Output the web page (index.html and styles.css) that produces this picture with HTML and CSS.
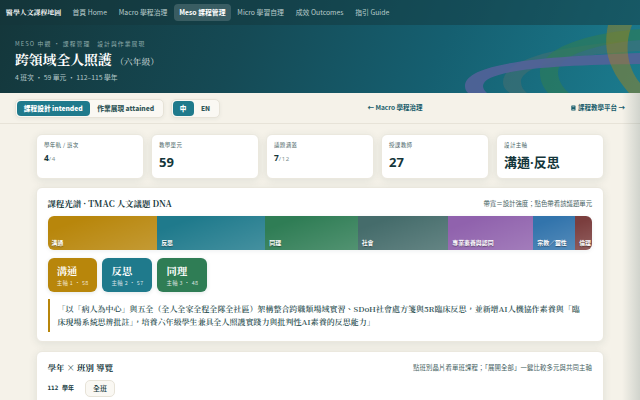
FILE: index.html
```html
<!DOCTYPE html>
<html lang="zh-Hant">
<head>
  <meta charset="UTF-8">
  <meta name="viewport" content="width=device-width, initial-scale=1.0">
  <title>醫學人文課程地圖</title>
  <link rel="stylesheet" href="styles.css">
</head>
<body>
  <header class="top">
    <nav class="nav">
      <span class="brand">醫學人文課程地圖</span>
      <a>首頁 Home</a>
      <a>Macro 學程治理</a>
      <a class="active">Meso 課程管理</a>
      <a>Micro 學習自理</a>
      <a>成效 Outcomes</a>
      <a>指引 Guide</a>
    </nav>
    <div class="hero">
      <svg class="arcs" viewBox="460 25 180 68" width="180" height="68">
        <path class="arc-gray" d="M640 40 C575 44 503 56 503 82 C503 86 505 90 510 93 H527 C523 90 521 86 521 82 C521 64 580 54 640 51 Z"/>
        <path class="arc-green" d="M640 29 C590 33 540 47 540 73 C540 81 543 87 548 93 H569 C562 87 558 80 558 72 C558 55 597 44 640 40 Z"/>
        <path class="arc-purple" d="M640 53 C560 56 465 61 465 86 C465 89 466 91 468 93 H487 C485 91 483 89 483 86 C483 69 560 65 640 64 Z"/>
        <path class="arc-olive" d="M608 25 C604 45 605 65 629 93 H640 V83 C627 67 624 45 632 25 Z"/>
      </svg>
      <div class="eyebrow">MESO 中觀 · 課程管理　設計與作業展現</div>
      <h1>跨領域全人照護 <small>（六年級）</small></h1>
      <div class="meta">4 班次 · 59 單元 · 112–115 學年</div>
    </div>
  </header>

  <div class="toolbar">
    <div class="toggle mode"><b class="on">課程設計 intended</b><b>作業展現 attained</b></div>
    <div class="toggle lang"><b class="on">中</b><b>EN</b></div>
    <a class="macro-link">← Macro 學程治理</a>
    <a class="platform-link">
      <svg width="5" height="6" viewBox="0 0 5 6"><rect x="0.3" y="0.5" width="4.2" height="5" rx="0.5"/><path d="M1.3 1.7h2.2M1.3 4.5h2.2"/></svg>
      課程教學平台 →
    </a>
  </div>

  <main class="page">
    <section class="stats">
      <div class="stat"><label>學年軌 / 班次</label><div class="num small">4<i>/4</i></div></div>
      <div class="stat"><label>教學單元</label><div class="num">59</div></div>
      <div class="stat"><label>議題涵蓋</label><div class="num small">7<i>/12</i></div></div>
      <div class="stat"><label>授課教師</label><div class="num">27</div></div>
      <div class="stat"><label>設計主軸</label><div class="num">溝通·反思</div></div>
    </section>

    <section class="panel spectrum">
      <div class="panel-head">
        <h2>課程光譜 · TMAC 人文議題 DNA</h2>
        <span>帶寬＝設計強度；點色帶看該議題單元</span>
      </div>
      <div class="dna">
        <div class="band gold" style="width:20.15%">溝通</div>
        <div class="band teal" style="width:19.85%">反思</div>
        <div class="band green" style="width:16.95%">同理</div>
        <div class="band slate" style="width:16.65%">社會</div>
        <div class="band purple" style="width:15.6%">專業素養與認同</div>
        <div class="band blue" style="width:7.7%">宗教／靈性</div>
        <div class="band red" style="width:3.1%">倫理</div>
      </div>
      <div class="axes">
        <div class="axis gold"><strong>溝通</strong><span>主軸 1 · 58</span></div>
        <div class="axis teal"><strong>反思</strong><span>主軸 2 · 57</span></div>
        <div class="axis green"><strong>同理</strong><span>主軸 3 · 48</span></div>
      </div>
      <blockquote>「以「病人為中心」與五全（全人全家全程全隊全社區）架構整合跨職類場域實習、SDoH社會處方箋與5R臨床反思，並新增AI人機協作素養與「臨<br>床現場系統思辨批註」，培養六年級學生兼具全人照護實踐力與批判性AI素養的反思能力」</blockquote>
    </section>

    <section class="panel classes">
      <div class="panel-head">
        <h2>學年 × 班別 導覽</h2>
        <span>點班別晶片看單班課程；「展開全部」一鍵比較多元與共同主軸</span>
      </div>
      <div class="year"><b>112 學年</b><button>全班</button></div>
    </section>
  </main>
  <div class="edge-shade"></div>
</body>
</html>
```

FILE: styles.css
```css
* { box-sizing: border-box; }
body {
  margin: 0;
  height: 400px;
  overflow: hidden;
  position: relative;
  background: #f5f2e9;
  color: #173b3f;
  font-family: "Noto Sans", "Noto Sans CJK TC", sans-serif;
  font-size: 6px;
  line-height: 1.4;
}
.brand, h1, h2, .axis strong, blockquote {
  font-family: "Noto Serif TC", "Noto Serif CJK TC", "Noto Sans CJK TC", serif;
}
.top {
  height: 93px;
  background: linear-gradient(112deg, #14363a 0%, #154a55 38%, #155f70 68%, #1b7b8e 100%);
  color: #fff;
}
.nav {
  height: 25px;
  display: flex;
  align-items: center;
  padding-left: 6px;
  background: rgba(20, 54, 58, 0.45);
  font-family: "Noto Sans CJK TC", sans-serif;
  font-size: 6.85px;
  white-space: nowrap;
}
.brand {
  width: 61px;
  font-size: 6.9px;
  font-weight: 700;
}
.nav a {
  height: 17px;
  line-height: 17px;
  padding: 0 5.5px;
  margin-right: 0.8px;
  border-radius: 4px;
  color: #b9cccb;
}
.nav .active {
  background: rgba(255, 255, 255, 0.16);
  color: #fff;
  font-weight: 700;
}
.hero {
  position: relative;
  height: 68px;
  padding: 14px 15px 0;
  font-family: "Noto Sans CJK TC", sans-serif;
}
.arcs {
  position: absolute;
  top: 0;
  right: 0;
}
.arc-olive { fill: #b8860b; opacity: 0.42; }
.arc-green { fill: #2f7d55; opacity: 0.6; }
.arc-gray { fill: #4c7070; opacity: 0.5; }
.arc-purple { fill: #54629a; opacity: 0.88; }
.eyebrow {
  height: 9px;
  line-height: 9px;
  font-size: 5.8px;
  letter-spacing: 1.07px;
  color: #8fabab;
}
h1 {
  margin: 1px 0 0;
  height: 20px;
  line-height: 20px;
  font-size: 13.8px;
  font-weight: 700;
}
h1 small {
  font-size: 8.8px;
  font-weight: 500;
  color: #c8d6d6;
}
.meta {
  margin-top: 4px;
  line-height: 9px;
  font-size: 6.8px;
  color: #b4c8c9;
}
.toolbar {
  height: 31px;
  display: flex;
  align-items: center;
  padding: 0 15px 0 16px;
  border-bottom: 1px solid #e7e3d8;
  font-family: "Noto Sans CJK TC", sans-serif;
  font-size: 6.6px;
  font-weight: 700;
  color: #195d6b;
}
.toggle {
  display: flex;
  height: 19px;
  padding: 1px;
  border: 1px solid #e7e3d8;
  border-radius: 5px;
  background: #faf8f3;
  box-shadow: 0 1px 4px rgba(20, 54, 58, 0.06);
  color: #35585a;
}
.toggle b {
  flex: 1;
  text-align: center;
  line-height: 15px;
  border-radius: 4px;
}
.toggle .on {
  background: #1f7a8c;
  color: #fff;
}
.mode {
  width: 149px;
  margin-left: -1px;
  font-size: 6.7px;
}
.lang { width: 49px; margin-left: 6.5px; }
.lang .on { flex: 0 0 21px; }
.macro-link { margin-left: 148px; font-size: 6.5px; }
.platform-link {
  margin-left: auto;
  display: flex;
  align-items: center;
  gap: 2px;
  font-size: 6.5px;
}
.platform-link rect { fill: #195d6b; }
.platform-link path { stroke: #dfe8e5; stroke-width: 0.6; }
.page { padding: 10px 36.4px 0 36px; }
.stats {
  display: grid;
  grid-template-columns: repeat(5, 1fr);
  gap: 7.5px;
}
.stat, .panel {
  background: #fff;
  border: 1px solid #ebe8de;
  border-radius: 6px;
  box-shadow: 0 2px 8px rgba(20, 54, 58, 0.09);
}
.stat {
  height: 44.5px;
  padding: 6px 7px;
}
.stat label {
  display: block;
  height: 9px;
  line-height: 9px;
  font-family: "Noto Sans CJK TC", sans-serif;
  font-size: 5.5px;
  letter-spacing: 0.3px;
  color: #45625f;
}
.num {
  margin-top: 4px;
  line-height: 17px;
  font-family: "Noto Sans", "Noto Sans CJK TC", sans-serif;
  font-size: 13px;
  font-weight: 700;
  color: #14363a;
}
.num.small {
  margin-top: 2px;
  line-height: 11px;
  font-size: 8.4px;
}
.num i {
  font-size: 6px;
  font-style: normal;
  font-weight: 400;
  letter-spacing: 0.6px;
  color: #7e9190;
}
.panel {
  margin-top: 8.5px;
  padding: 9.5px 10.5px;
}
.spectrum { height: 154.5px; }
.classes { height: 120px; margin-top: 9.5px; }
.panel-head {
  display: flex;
  justify-content: space-between;
  align-items: center;
  height: 13px;
}
.panel-head h2 {
  margin: 0;
  font-size: 8.45px;
  font-weight: 700;
  color: #14363a;
}
.panel-head span {
  font-family: "Noto Sans CJK TC", sans-serif;
  font-size: 6.4px;
  color: #45625f;
}
.classes .panel-head span { letter-spacing: 0.12px; }
.dna {
  display: flex;
  height: 34px;
  margin-top: 5.5px;
  border-radius: 6px;
  overflow: hidden;
  box-shadow: 0 1px 4px rgba(20, 54, 58, 0.08);
}
.band {
  flex-shrink: 0;
  padding: 22px 0 0 4px;
  overflow: hidden;
  white-space: nowrap;
  font-family: "Noto Sans CJK TC", sans-serif;
  font-size: 5.9px;
  line-height: 9px;
  font-weight: 700;
  color: #fff;
  text-shadow: 0 0.5px 1px rgba(0, 0, 0, 0.4);
  background-image: linear-gradient(160deg, rgba(255, 255, 255, 0) 20%, rgba(255, 255, 255, 0.17));
}
.gold { background-color: #b8860b; }
.teal { background-color: #1f7a8c; }
.green { background-color: #2f7d55; }
.slate { background-color: #456c6b; }
.purple { background-color: #9062ad; }
.blue { background-color: #3274ac; }
.red { background-color: #7b3e3e; }
.axes {
  display: flex;
  gap: 5px;
  margin-top: 7.5px;
}
.axis {
  width: 49.8px;
  height: 34px;
  padding: 6px 0 0 9.3px;
  border-radius: 6px;
  color: #fff;
  box-shadow: 0 1px 4px rgba(20, 54, 58, 0.12);
}
.axis strong {
  display: block;
  font-size: 10.3px;
  line-height: 13px;
}
.axis span {
  display: block;
  line-height: 9px;
  margin-top: 2px;
  font-family: "Noto Sans CJK TC", sans-serif;
  font-size: 5.4px;
  letter-spacing: 0.35px;
  color: rgba(255, 255, 255, 0.8);
  white-space: nowrap;
}
blockquote {
  margin: 7px 0 0;
  height: 33px;
  padding: 3px 0 0 8px;
  border-left: 2px solid #b8860b;
  font-size: 8px;
  line-height: 13px;
  font-weight: 600;
  color: #2b4e50;
  white-space: nowrap;
}
.year {
  display: flex;
  align-items: center;
  height: 17px;
  margin-top: 5px;
  gap: 11px;
}
.year b {
  font-family: "DejaVu Sans Mono", "Noto Sans CJK TC", monospace;
  font-size: 6px;
}
.year button {
  width: 30px;
  height: 17px;
  padding: 0;
  border: 1px solid #e7e3d8;
  border-radius: 5px;
  background: #faf8f3;
  font-family: "Noto Sans CJK TC", sans-serif;
  font-size: 7px;
  font-weight: 500;
  color: #173b3f;
}
.edge-shade {
  position: absolute;
  top: 93px;
  right: 0;
  bottom: 0;
  width: 18px;
  background: linear-gradient(90deg, rgba(20, 54, 58, 0), rgba(20, 54, 58, 0.16));
}
```
